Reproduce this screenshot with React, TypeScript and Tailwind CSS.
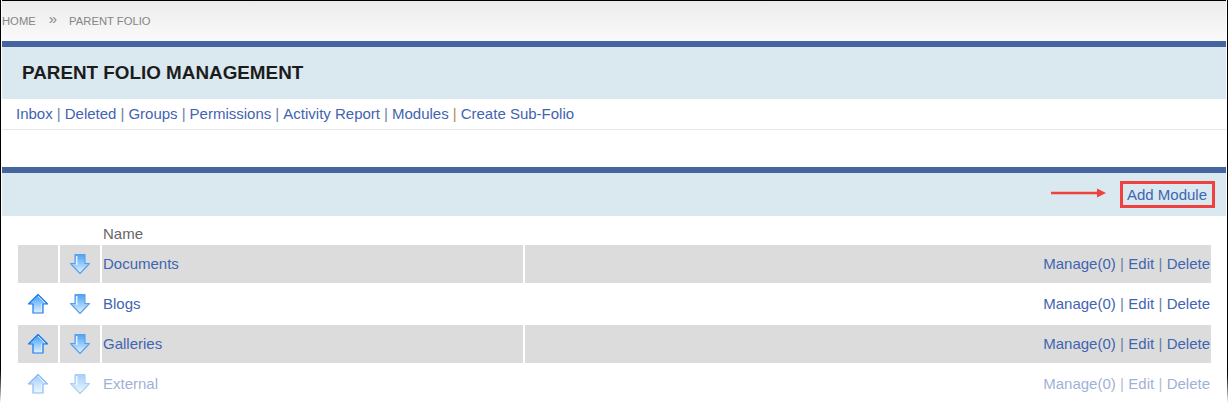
const link = 'text-[#3f65b0]';

const Sep = ({ orange = false, wide = false }: { orange?: boolean; wide?: boolean }) => (
  <span className={`${orange ? 'text-[#b08a5a]' : 'text-[#6a7fa8]'} ${wide ? 'mx-[4.3px]' : 'mx-[4.05px]'}`}>|</span>
);

const UpArrow = () => (
  <svg width="22" height="22" viewBox="0 0 22 22">
    <defs>
      <linearGradient id="upg" x1="0" y1="0" x2="0" y2="1">
        <stop offset="0" stopColor="#3a9bf8" />
        <stop offset="1" stopColor="#e2f2ff" />
      </linearGradient>
    </defs>
    <path d="M11 1.5 L20.5 11 L16 11 L16 20 L6 20 L6 11 L1.5 11 Z" fill="url(#upg)" stroke="#1a78ea" strokeWidth="1.2" strokeLinejoin="round" />
    <path d="M11 3 L18 10 M14.5 11 L14.5 18.5 L8 18.5" fill="none" stroke="#d5ebff" strokeWidth="1" />
  </svg>
);

const DownArrow = () => (
  <svg width="22" height="22" viewBox="0 0 22 22">
    <defs>
      <linearGradient id="downg" x1="0" y1="0" x2="0" y2="1">
        <stop offset="0" stopColor="#4aa2f7" />
        <stop offset="1" stopColor="#e6f3ff" />
      </linearGradient>
    </defs>
    <path d="M6 1.5 L16 1.5 L16 10.5 L20.5 10.5 L11 20.5 L1.5 10.5 L6 10.5 Z" fill="url(#downg)" stroke="#5a9fe8" strokeWidth="1.1" strokeLinejoin="round" />
    <path d="M7.7 3 L7.7 12" stroke="#eaf5ff" strokeWidth="1.4" />
  </svg>
);

const rows = [
  { name: 'Documents', up: false, gray: true },
  { name: 'Blogs', up: true, gray: false },
  { name: 'Galleries', up: true, gray: true },
  { name: 'External', up: true, gray: false },
];

const App = () => {
  return (
    <div className="relative w-[1228px] h-[407px] overflow-hidden bg-white font-['Liberation_Sans',Arial,sans-serif] text-[15px]">
      <div className="ml-[2px] mr-[2px] border-t border-black">
        {/* breadcrumb */}
        <div className="h-[40px] flex items-center bg-gradient-to-b from-[#ececec] to-[#fafafa] text-[11.25px] text-[#858585]">
          <span>HOME</span>
          <span className="ml-[13px] mr-[12px] -mt-[5px] text-[15px] leading-none">»</span>
          <span>PARENT FOLIO</span>
        </div>

        <div className="h-[6px] bg-[#44659f]" />
        <div className="h-[52px] flex items-center pl-[20px] bg-[#dae8f0] text-[18.85px] font-bold text-[#1c1c1c]">
          PARENT FOLIO MANAGEMENT
        </div>
        <div className={`h-[31px] pl-[14px] flex items-center border-b border-[#e6e6e6] ${link}`}>
          <span>Inbox</span><Sep />
          <span>Deleted</span><Sep />
          <span>Groups</span><Sep />
          <span>Permissions</span><Sep />
          <span>Activity Report</span><Sep />
          <span>Modules</span><Sep orange />
          <span>Create Sub-Folio</span>
        </div>

        <div className="h-[37px]" />

        <div className="h-[6px] bg-[#44659f]" />
        <div className="h-[43px] flex items-center justify-end pr-[11px] bg-[#dae8f0]">
          <svg width="55" height="10" viewBox="0 0 55 10" className="mr-[14px] -mt-[3px]">
            <path d="M0 5 H47" stroke="#f04040" strokeWidth="2.5" />
            <path d="M46 0.5 L55 5 L46 9.5 Z" fill="#f04040" />
          </svg>
          <div className={`h-[27px] w-[95px] flex items-center justify-center pt-[1px] pr-[1px] border-[3px] border-[#f04040] ${link}`}>
            Add Module
          </div>
        </div>

        {/* module table */}
        <div className="pl-[16px] pr-[15px] pt-[8px]">
          <div className="h-[21px] pl-[85px] flex items-center text-[#666666]">Name</div>
          <div className="flex flex-col gap-[2px]">
            {rows.map((r) => (
              <div key={r.name} className={`grid grid-cols-[40px_40px_421px_1fr] gap-x-[2px] h-[38px] ${r.name === 'External' ? 'opacity-50' : ''}`}>
                <div className={`flex items-center justify-center ${r.gray ? 'bg-[#dcdcdc]' : ''}`}>
                  {r.up && <UpArrow />}
                </div>
                <div className={`flex items-center justify-center ${r.gray ? 'bg-[#dcdcdc]' : ''}`}>
                  <DownArrow />
                </div>
                <div className={`flex items-center pl-[1px] pt-[1px] ${link} ${r.gray ? 'bg-[#dcdcdc]' : ''}`}>{r.name}</div>
                <div className={`flex items-center justify-end pr-[1px] pt-[1px] ${link} ${r.gray ? 'bg-[#dcdcdc]' : ''}`}>
                  <span>Manage(0)</span><Sep wide />
                  <span>Edit</span><Sep wide />
                  <span>Delete</span>
                </div>
              </div>
            ))}
          </div>
        </div>
      </div>
      {/* window edges, fade out at the bottom */}
      <div className="absolute left-0 top-0 w-[1px] h-[407px] bg-gradient-to-b from-black from-[90%] to-white to-[99%]" />
      <div className="absolute right-0 top-0 w-[1px] h-[407px] bg-gradient-to-b from-black from-[91%] to-white to-[99%]" />
    </div>
  );
};

export default App;
